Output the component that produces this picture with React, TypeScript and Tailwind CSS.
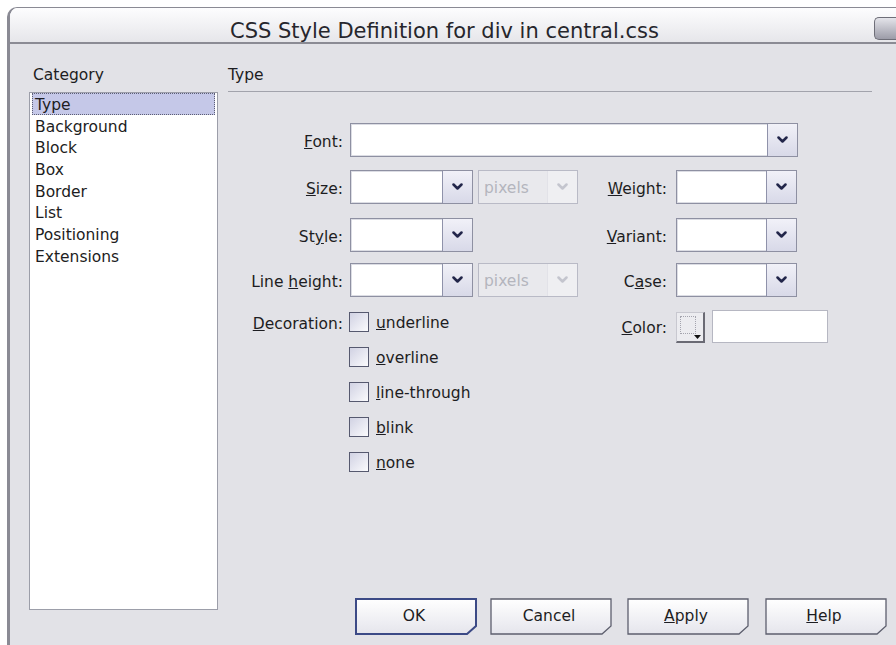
import React from 'react';

const categories = ['Type', 'Background', 'Block', 'Box', 'Border', 'List', 'Positioning', 'Extensions'];

const decorations: { key: string; rest: string }[] = [
  { key: 'u', rest: 'nderline' },
  { key: 'o', rest: 'verline' },
  { key: 'l', rest: 'ine-through' },
  { key: 'b', rest: 'link' },
  { key: 'n', rest: 'one' },
];

const Chevron: React.FC<{ muted?: boolean }> = ({ muted }) => (
  <svg width="11" height="8" viewBox="0 0 11 8">
    <polyline
      points="1.5,1.5 5.5,5.5 9.5,1.5"
      fill="none"
      stroke={muted ? '#c4c5ce' : '#22264a'}
      strokeWidth="2.5"
      strokeLinecap="round"
      strokeLinejoin="round"
    />
  </svg>
);

// Combo box: white field with a dropdown button on its right
const Select: React.FC<{ width: string; value?: string; disabled?: boolean }> = ({ width, value, disabled }) => (
  <div
    className={`${width} flex h-[34px] border ${
      disabled ? 'border-[#b9bac6] bg-[#e9e9ed]' : 'border-[#8e90a2] bg-white shadow-[inset_0_0_0_1px_#dcdde4]'
    }`}
  >
    <div className={`flex-1 flex items-center pl-[5px] pt-[3px] ${disabled ? 'text-[#b4b5bd]' : ''}`}>{value}</div>
    <div
      className={`w-[30px] flex items-center justify-center border-l ${
        disabled
          ? 'border-[#e2e2e8] bg-[#efeff2]'
          : 'border-[#8f92aa] bg-linear-to-b from-[#f1f1f8] to-[#d8d9e8]'
      }`}
    >
      <Chevron muted={disabled} />
    </div>
  </div>
);

const Label: React.FC<{ width: string; children: React.ReactNode; className?: string }> = ({ width, children, className = '' }) => (
  <div className={`${width} shrink-0 text-right leading-[20px] ${className}`}>{children}</div>
);

const Checkbox: React.FC = () => (
  <div className="w-[20px] h-[20px] shrink-0 border border-[#56596f] bg-linear-to-br from-[#d1d2e3] to-[#fbfbfd]" />
);

const DlgButton: React.FC<{ children: React.ReactNode; isDefault?: boolean; className?: string }> = ({ children, isDefault, className = '' }) => (
  <div className={`relative w-[122px] h-[37px] shrink-0 flex items-center justify-center ${className}`}>
    <svg className="absolute inset-0" width="122" height="37" viewBox="0 0 122 37">
      <defs>
        <linearGradient id="btnFill" x1="0" y1="0" x2="0" y2="1">
          <stop offset="0" stopColor="#ffffff" />
          <stop offset="1" stopColor="#e5e5ec" />
        </linearGradient>
      </defs>
      <polygon
        points="1,1 121,1 121,28 112,36 1,36"
        fill="url(#btnFill)"
        stroke={isDefault ? '#3c4a86' : '#5d5f6e'}
        strokeWidth={isDefault ? 2 : 1.3}
      />
    </svg>
    <span className="relative pr-[4px]">{children}</span>
  </div>
);

const App: React.FC = () => {
  return (
    <div className="w-[896px] h-[645px] overflow-hidden bg-white pt-[7px] pl-[7px] text-[15.5px] text-[#1d1d22] font-['DejaVu_Sans',sans-serif]">
      <div className="h-full flex flex-col rounded-tl-[10px] border-l-[3px] border-t border-[#8a8a94] overflow-hidden">
        {/* Title bar */}
        <div className="h-[36px] shrink-0 flex items-start border-b-2 border-[#8b8b94] bg-linear-to-b from-[#fdfdfe] to-[#e6e6ea]">
          <div className="pl-[220px] pt-[12px] leading-[22px] text-[21px] text-[#26262c]">
            CSS Style Definition for div in central.css
          </div>
          <div className="flex-1" />
          <div className="mt-[9px] w-[22px] h-[23px] rounded-l-[5px] border border-r-0 border-[#6e6e78] bg-linear-to-b from-[#e4e4ea] to-[#9c9ca8]" />
        </div>

        {/* Dialog body */}
        <div className="flex-1 flex bg-[#e2e2e7] pl-[19px] pt-[21px] gap-[10px]">
          {/* Category list */}
          <div className="w-[189px] flex flex-col">
            <div className="leading-[20px] pl-[4px] mb-[7px]">Category</div>
            <div className="h-[518px] border border-[#9c9ea9] bg-white">
              {categories.map((c, i) => (
                <div
                  key={c}
                  className={`h-[21.7px] leading-[18px] pt-[3px] px-[3px] mx-[2px] ${
                    i === 0 ? 'bg-[#c5c8e8] outline outline-dotted outline-[#5c5e74] -outline-offset-1' : ''
                  }`}
                >
                  {c}
                </div>
              ))}
            </div>
          </div>

          {/* Type panel */}
          <div className="w-[644px] flex flex-col">
            <div className="leading-[20px] pb-[6px] border-b border-[#a2a3ac]">Type</div>

            <div className="mt-[31px] h-[34px] flex items-center">
              <Label width="w-[115px]" className="pt-[4px]"><u>F</u>ont:</Label>
              <div className="ml-[7px]"><Select width="w-[448px]" /></div>
            </div>

            <div className="mt-[13px] h-[34px] flex items-center">
              <Label width="w-[115px]" className="pt-[4px]"><u>S</u>ize:</Label>
              <div className="ml-[7px]"><Select width="w-[123px]" /></div>
              <div className="ml-[5px]"><Select width="w-[100px]" value="pixels" disabled /></div>
              <Label width="w-[89px]" className="pt-[4px]"><u>W</u>eight:</Label>
              <div className="ml-[9px]"><Select width="w-[121px]" /></div>
            </div>

            <div className="mt-[14px] h-[34px] flex items-center">
              <Label width="w-[115px]" className="pt-[4px]">St<u>y</u>le:</Label>
              <div className="ml-[7px]"><Select width="w-[123px]" /></div>
              <div className="w-[105px] shrink-0" />
              <Label width="w-[89px]" className="pt-[4px]"><u>V</u>ariant:</Label>
              <div className="ml-[9px]"><Select width="w-[121px]" /></div>
            </div>

            <div className="mt-[11px] h-[34px] flex items-center">
              <Label width="w-[115px]" className="pt-[4px]">Line <u>h</u>eight:</Label>
              <div className="ml-[7px]"><Select width="w-[123px]" /></div>
              <div className="ml-[5px]"><Select width="w-[100px]" value="pixels" disabled /></div>
              <Label width="w-[89px]" className="pt-[4px]">C<u>a</u>se:</Label>
              <div className="ml-[9px]"><Select width="w-[121px]" /></div>
            </div>

            {/* Decoration checkboxes and colour picker */}
            <div className="mt-[13px] flex items-start">
              <Label width="w-[115px]" className="mt-[4px]"><u>D</u>ecoration:</Label>
              <div className="ml-[6px] mt-[2px] w-[229px] flex flex-col gap-[15px]">
                {decorations.map((d) => (
                  <div key={d.key} className="h-[20px] flex items-center gap-[7px]">
                    <Checkbox />
                    <span className="pt-[3px]"><u>{d.key}</u>{d.rest}</span>
                  </div>
                ))}
              </div>
              <Label width="w-[89px]" className="mt-[8px]"><u>C</u>olor:</Label>
              <div className="ml-[9px] mt-[2px] relative w-[29px] h-[31px] border-t border-l border-[#c8c8d0] border-r-2 border-b-2 border-r-[#6a6a74] border-b-[#6a6a74] bg-[#ececf0] p-[3px]">
                <div className="w-[16px] h-[18px] border border-dotted border-[#a4a4ae]" />
                <svg className="absolute right-[2px] bottom-[2px]" width="7" height="4" viewBox="0 0 7 4">
                  <polygon points="0,0 7,0 3.5,4" fill="#111" />
                </svg>
              </div>
              <div className="ml-[7px] w-[116px] h-[33px] border border-[#b6b7c2] bg-white" />
            </div>

            {/* Dialog buttons */}
            <div className="mt-auto mb-[10px] pl-[127px] flex">
              <DlgButton isDefault>OK</DlgButton>
              <DlgButton className="ml-[13px]">Cancel</DlgButton>
              <DlgButton className="ml-[15px]"><u>A</u>pply</DlgButton>
              <DlgButton className="ml-[16px]"><u>H</u>elp</DlgButton>
            </div>
          </div>
        </div>
      </div>
    </div>
  );
};

export default App;
